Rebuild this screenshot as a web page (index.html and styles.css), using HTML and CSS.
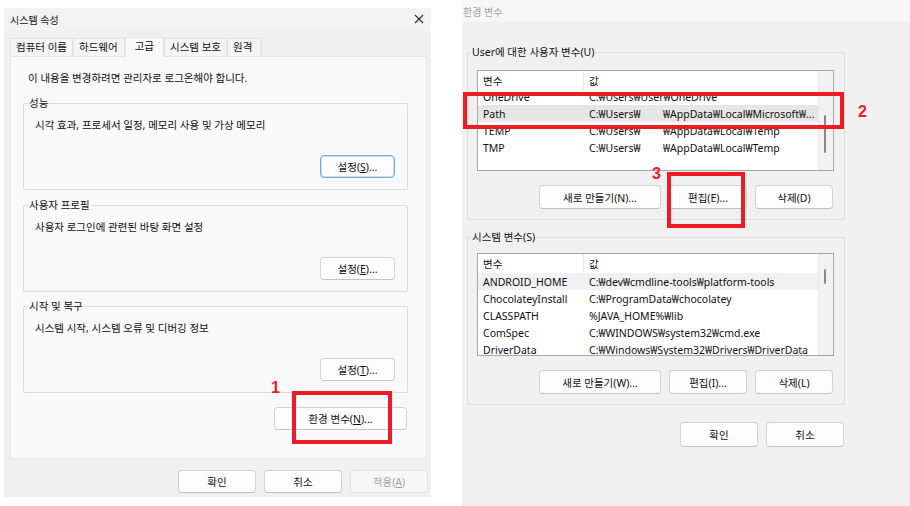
FILE: index.html
```html
<!DOCTYPE html>
<html lang="ko">
<head>
    <meta charset="UTF-8">
    <title>시스템 속성 / 환경 변수</title>
    <link rel="stylesheet" href="styles.css">
</head>
<body>
<div class="page">
    <!-- 시스템 속성 -->
    <div class="dialog sys">
        <div class="titlebar">
            <span class="title">시스템 속성</span>
            <svg class="close" width="10" height="10" viewBox="0 0 10 10"><path d="M1 1L9 9M9 1L1 9" stroke="#2b2b2b" stroke-width="1.1"/></svg>
        </div>
        <div class="sys-body">
            <div class="tabs">
                <span class="tab">컴퓨터 이름</span>
                <span class="tab">하드웨어</span>
                <span class="tab active">고급</span>
                <span class="tab">시스템 보호</span>
                <span class="tab">원격</span>
            </div>
            <div class="tab-panel">
                <p class="note">이 내용을 변경하려면 관리자로 로그온해야 합니다.</p>

                <div class="group box-group">
                    <span class="group-title">성능</span>
                    <p class="group-text">시각 효과, 프로세서 일정, 메모리 사용 및 가상 메모리</p>
                    <button class="btn btn-set focused">설정(<u>S</u>)...</button>
                </div>

                <div class="group box-group">
                    <span class="group-title">사용자 프로필</span>
                    <p class="group-text">사용자 로그인에 관련된 바탕 화면 설정</p>
                    <button class="btn btn-set">설정(<u>E</u>)...</button>
                </div>

                <div class="group box-group">
                    <span class="group-title">시작 및 복구</span>
                    <p class="group-text">시스템 시작, 시스템 오류 및 디버깅 정보</p>
                    <button class="btn btn-set">설정(<u>T</u>)...</button>
                </div>

                <button class="btn btn-env">환경 변수(<u>N</u>)...</button>
            </div>
            <div class="dialog-buttons">
                <button class="btn btn-wide">확인</button>
                <button class="btn btn-wide">취소</button>
                <button class="btn btn-wide" disabled>적용(<u>A</u>)</button>
            </div>
        </div>
    </div>

    <!-- 환경 변수 -->
    <div class="dialog env">
        <div class="titlebar env-titlebar">
            <span class="title">환경 변수</span>
        </div>
        <div class="env-body">
            <div class="group var-group user-vars">
                <span class="group-title">User에 대한 사용자 변수(U)</span>
                <div class="list">
                    <div class="list-main">
                        <div class="list-head"><span class="col-name">변수</span><span class="col-value">값</span></div>
                        <div class="list-body">
                            <div class="rows">
                                <div class="row"><span class="col-name">OneDrive</span><span class="col-value">C:₩Users₩User₩OneDrive</span></div>
                                <div class="row selected"><span class="col-name">Path</span><span class="col-value"><span class="hidden-user">C:₩Users₩</span>₩AppData₩Local₩Microsoft₩...</span></div>
                                <div class="row"><span class="col-name">TEMP</span><span class="col-value"><span class="hidden-user">C:₩Users₩</span>₩AppData₩Local₩Temp</span></div>
                                <div class="row"><span class="col-name">TMP</span><span class="col-value"><span class="hidden-user">C:₩Users₩</span>₩AppData₩Local₩Temp</span></div>
                            </div>
                        </div>
                    </div>
                    <div class="list-scroll"><span class="thumb"></span></div>
                </div>
                <div class="group-buttons">
                    <button class="btn btn-new">새로 만들기(N)...</button>
                    <button class="btn btn-wide">편집(E)...</button>
                    <button class="btn btn-wide">삭제(D)</button>
                </div>
            </div>

            <div class="group var-group system-vars">
                <span class="group-title">시스템 변수(S)</span>
                <div class="list">
                    <div class="list-main">
                        <div class="list-head"><span class="col-name">변수</span><span class="col-value">값</span></div>
                        <div class="list-body">
                            <div class="rows">
                                <div class="row hover"><span class="col-name">ANDROID_HOME</span><span class="col-value">C:₩dev₩cmdline-tools₩platform-tools</span></div>
                                <div class="row"><span class="col-name">ChocolateyInstall</span><span class="col-value">C:₩ProgramData₩chocolatey</span></div>
                                <div class="row"><span class="col-name">CLASSPATH</span><span class="col-value">%JAVA_HOME%₩lib</span></div>
                                <div class="row"><span class="col-name">ComSpec</span><span class="col-value">C:₩WINDOWS₩system32₩cmd.exe</span></div>
                                <div class="row"><span class="col-name">DriverData</span><span class="col-value">C:₩Windows₩System32₩Drivers₩DriverData</span></div>
                            </div>
                        </div>
                    </div>
                    <div class="list-scroll"><span class="thumb"></span></div>
                </div>
                <div class="group-buttons">
                    <button class="btn btn-new">새로 만들기(W)...</button>
                    <button class="btn btn-wide">편집(I)...</button>
                    <button class="btn btn-wide">삭제(L)</button>
                </div>
            </div>

            <div class="dialog-buttons env-buttons">
                <button class="btn btn-wide">확인</button>
                <button class="btn btn-wide">취소</button>
            </div>
        </div>
    </div>

    <!-- 안내 표시 -->
    <div class="mark mark-box box-1"></div>
    <span class="mark mark-num num-1">1</span>
    <div class="mark mark-box box-2"></div>
    <span class="mark mark-num num-2">2</span>
    <div class="mark mark-box box-3"></div>
    <span class="mark mark-num num-3">3</span>
</div>
</body>
</html>
```

FILE: styles.css
```css
:root {
    --dialog-bg: #f0f0f0;
    --panel-bg: #f9f9f9;
    --line: #dcdcdc;
    --text: #101010;
    --mark: #ec1c24;
}
body {
    margin: 0;
    background: #fff;
    font-family: "Noto Sans", "Noto Sans CJK KR", sans-serif;
    font-size: 10.5px;
    color: var(--text);
}
p {
    margin: 0;
}
.page {
    position: relative;
    display: flex;
    align-items: flex-start;
    width: 910px;
    height: 506px;
    overflow: hidden;
}
.dialog {
    background: var(--dialog-bg);
    display: flex;
    flex-direction: column;
}
.titlebar {
    height: 22px;
    flex-shrink: 0;
    display: flex;
    align-items: center;
    justify-content: space-between;
    background: #f3f3f3;
    padding: 0 7px 0 6px;
}
.title {
    font-size: 10px;
}
.close {
    display: block;
}

/* buttons */
.btn {
    height: 23px;
    padding: 0;
    border: 1px solid #d3d3d3;
    border-bottom-color: #c2c2c2;
    border-radius: 4px;
    background: #fdfdfd;
    font: inherit;
    color: var(--text);
    display: flex;
    align-items: center;
    justify-content: center;
    white-space: nowrap;
}
.btn:disabled {
    color: #a3a3a3;
    background: #f7f7f7;
    border-color: #e2e2e2;
}
.btn.focused {
    border-color: #7aa5d6;
    box-shadow: inset 0 0 0 1px #cddff2;
}
.btn-wide {
    width: 78px;
}
.btn-set {
    width: 75px;
}
.btn-env {
    width: 133px;
}
.btn-new {
    width: 122px;
}

/* 시스템 속성 */
.sys {
    width: 427px;
    height: 489px;
    margin: 8px 0 0 4px;
}
.sys-body {
    padding: 7px 3px 0 6px;
}
.tabs {
    display: flex;
    align-items: flex-end;
    height: 19px;
}
.tab {
    height: 18px;
    line-height: 17px;
    padding: 0 5px;
    background: #f4f4f4;
    border: 1px solid #e3e3e3;
    border-bottom: none;
    box-sizing: border-box;
}
.tab:nth-child(2) {
    padding-right: 6px;
}
.tab.active {
    height: 20px;
    padding: 0 9px;
    background: var(--panel-bg);
    border-color: #e3e3e3;
    position: relative;
    top: 1px;
}
.tab:last-child {
    padding-right: 8px;
}
.tab-panel {
    height: 403px;
    box-sizing: border-box;
    margin-right: 1px;
    background: var(--panel-bg);
    border: 1px solid #e6e6e6;
    padding: 13px 18px 0 12px;
    display: flex;
    flex-direction: column;
}
.note {
    line-height: 16px;
    padding-left: 5px;
    margin-bottom: 17px;
}
.group {
    position: relative;
    border: 1px solid var(--line);
    border-radius: 2px;
    box-sizing: border-box;
}
.group-title {
    position: absolute;
    top: -9px;
    left: 4px;
    padding: 0 1px;
    line-height: 16px;
    background: var(--panel-bg);
}
.box-group {
    height: 87px;
    padding: 13px 12px 11px 11px;
    margin-bottom: 14px;
    display: flex;
    flex-direction: column;
}
.box-group:first-of-type {
    margin-bottom: 15px;
}
.group-text {
    line-height: 16px;
}
.box-group .btn {
    margin-top: auto;
    align-self: flex-end;
}
.btn-env {
    align-self: flex-end;
    margin-right: 1px;
}
.dialog-buttons {
    display: flex;
    justify-content: flex-end;
    gap: 8px;
    margin-top: 11px;
}

/* 환경 변수 */
.env {
    width: 448px;
    height: 506px;
    margin-left: 31px;
}
.env-titlebar {
    background: #f7f7f7;
    padding-left: 1px;
}
.env-titlebar .title {
    color: #a2a2a2;
}
.env-body {
    padding: 30px 0 0 5px;
    width: 378px;
}
.var-group {
    padding: 17px 10px 10px 9px;
}
.var-group .group-title {
    background: var(--dialog-bg);
    left: 3px;
}
.system-vars {
    margin-top: 17px;
    padding-top: 15px;
}
.list {
    display: flex;
    height: 101px;
    box-sizing: border-box;
    border: 1px solid #a6a6a6;
    background: #fff;
}
.system-vars .list {
    height: 103px;
}
.list-main {
    flex: 1;
    min-width: 0;
    display: flex;
    flex-direction: column;
}
.list-head {
    height: 19px;
    flex-shrink: 0;
    display: flex;
}
.list-head .col-name {
    border-right: 1px solid #e4e4e4;
}
.list-head span {
    display: flex;
    align-items: center;
}
.list-body {
    flex: 1;
    overflow: hidden;
}
.user-vars .rows {
    margin-top: -2px;
}
.row {
    display: flex;
    align-items: center;
    height: 17px;
    white-space: nowrap;
}
.row.selected {
    background: #e6e6e6;
}
.row.hover {
    background: #f1f1f1;
}
.col-name {
    width: 106px;
    flex-shrink: 0;
    box-sizing: border-box;
    padding-left: 5px;
}
.col-value {
    flex: 1;
    padding-left: 5px;
    overflow: hidden;
}
.hidden-user {
    display: inline-block;
    width: 74px;
}
.list-scroll {
    width: 15px;
    flex-shrink: 0;
    background: #f2f2f2;
    border-left: 1px solid #e8e8e8;
    box-sizing: border-box;
}
.thumb {
    display: block;
    width: 2px;
    height: 38px;
    margin: 44px 0 0 5px;
    background: #8a8a8a;
    border-radius: 1px;
}
.system-vars .thumb {
    height: 15px;
    margin-top: 15px;
}
.group-buttons {
    display: flex;
    justify-content: flex-end;
    gap: 8px;
    margin-top: 14px;
    padding-right: 1px;
}
.group-buttons .btn {
    height: 24px;
}
.env-buttons {
    margin-top: 17px;
    padding-right: 1px;
}
.env-buttons .btn {
    height: 25px;
    width: 78px;
}

/* red annotations */
.mark {
    position: absolute;
}
.mark-box {
    border: 4px solid var(--mark);
    box-sizing: border-box;
}
.mark-num {
    font-family: "Liberation Sans", sans-serif;
    font-weight: bold;
    font-size: 16px;
    line-height: 16px;
    color: var(--mark);
}
.box-1 {
    left: 292px;
    top: 391px;
    width: 100px;
    height: 53px;
}
.num-1 {
    left: 271px;
    top: 380px;
}
.box-2 {
    left: 463px;
    top: 92px;
    width: 381px;
    height: 37px;
}
.num-2 {
    left: 858px;
    top: 104px;
}
.box-3 {
    left: 667px;
    top: 172px;
    width: 78px;
    height: 56px;
}
.num-3 {
    left: 652px;
    top: 166px;
}
```
